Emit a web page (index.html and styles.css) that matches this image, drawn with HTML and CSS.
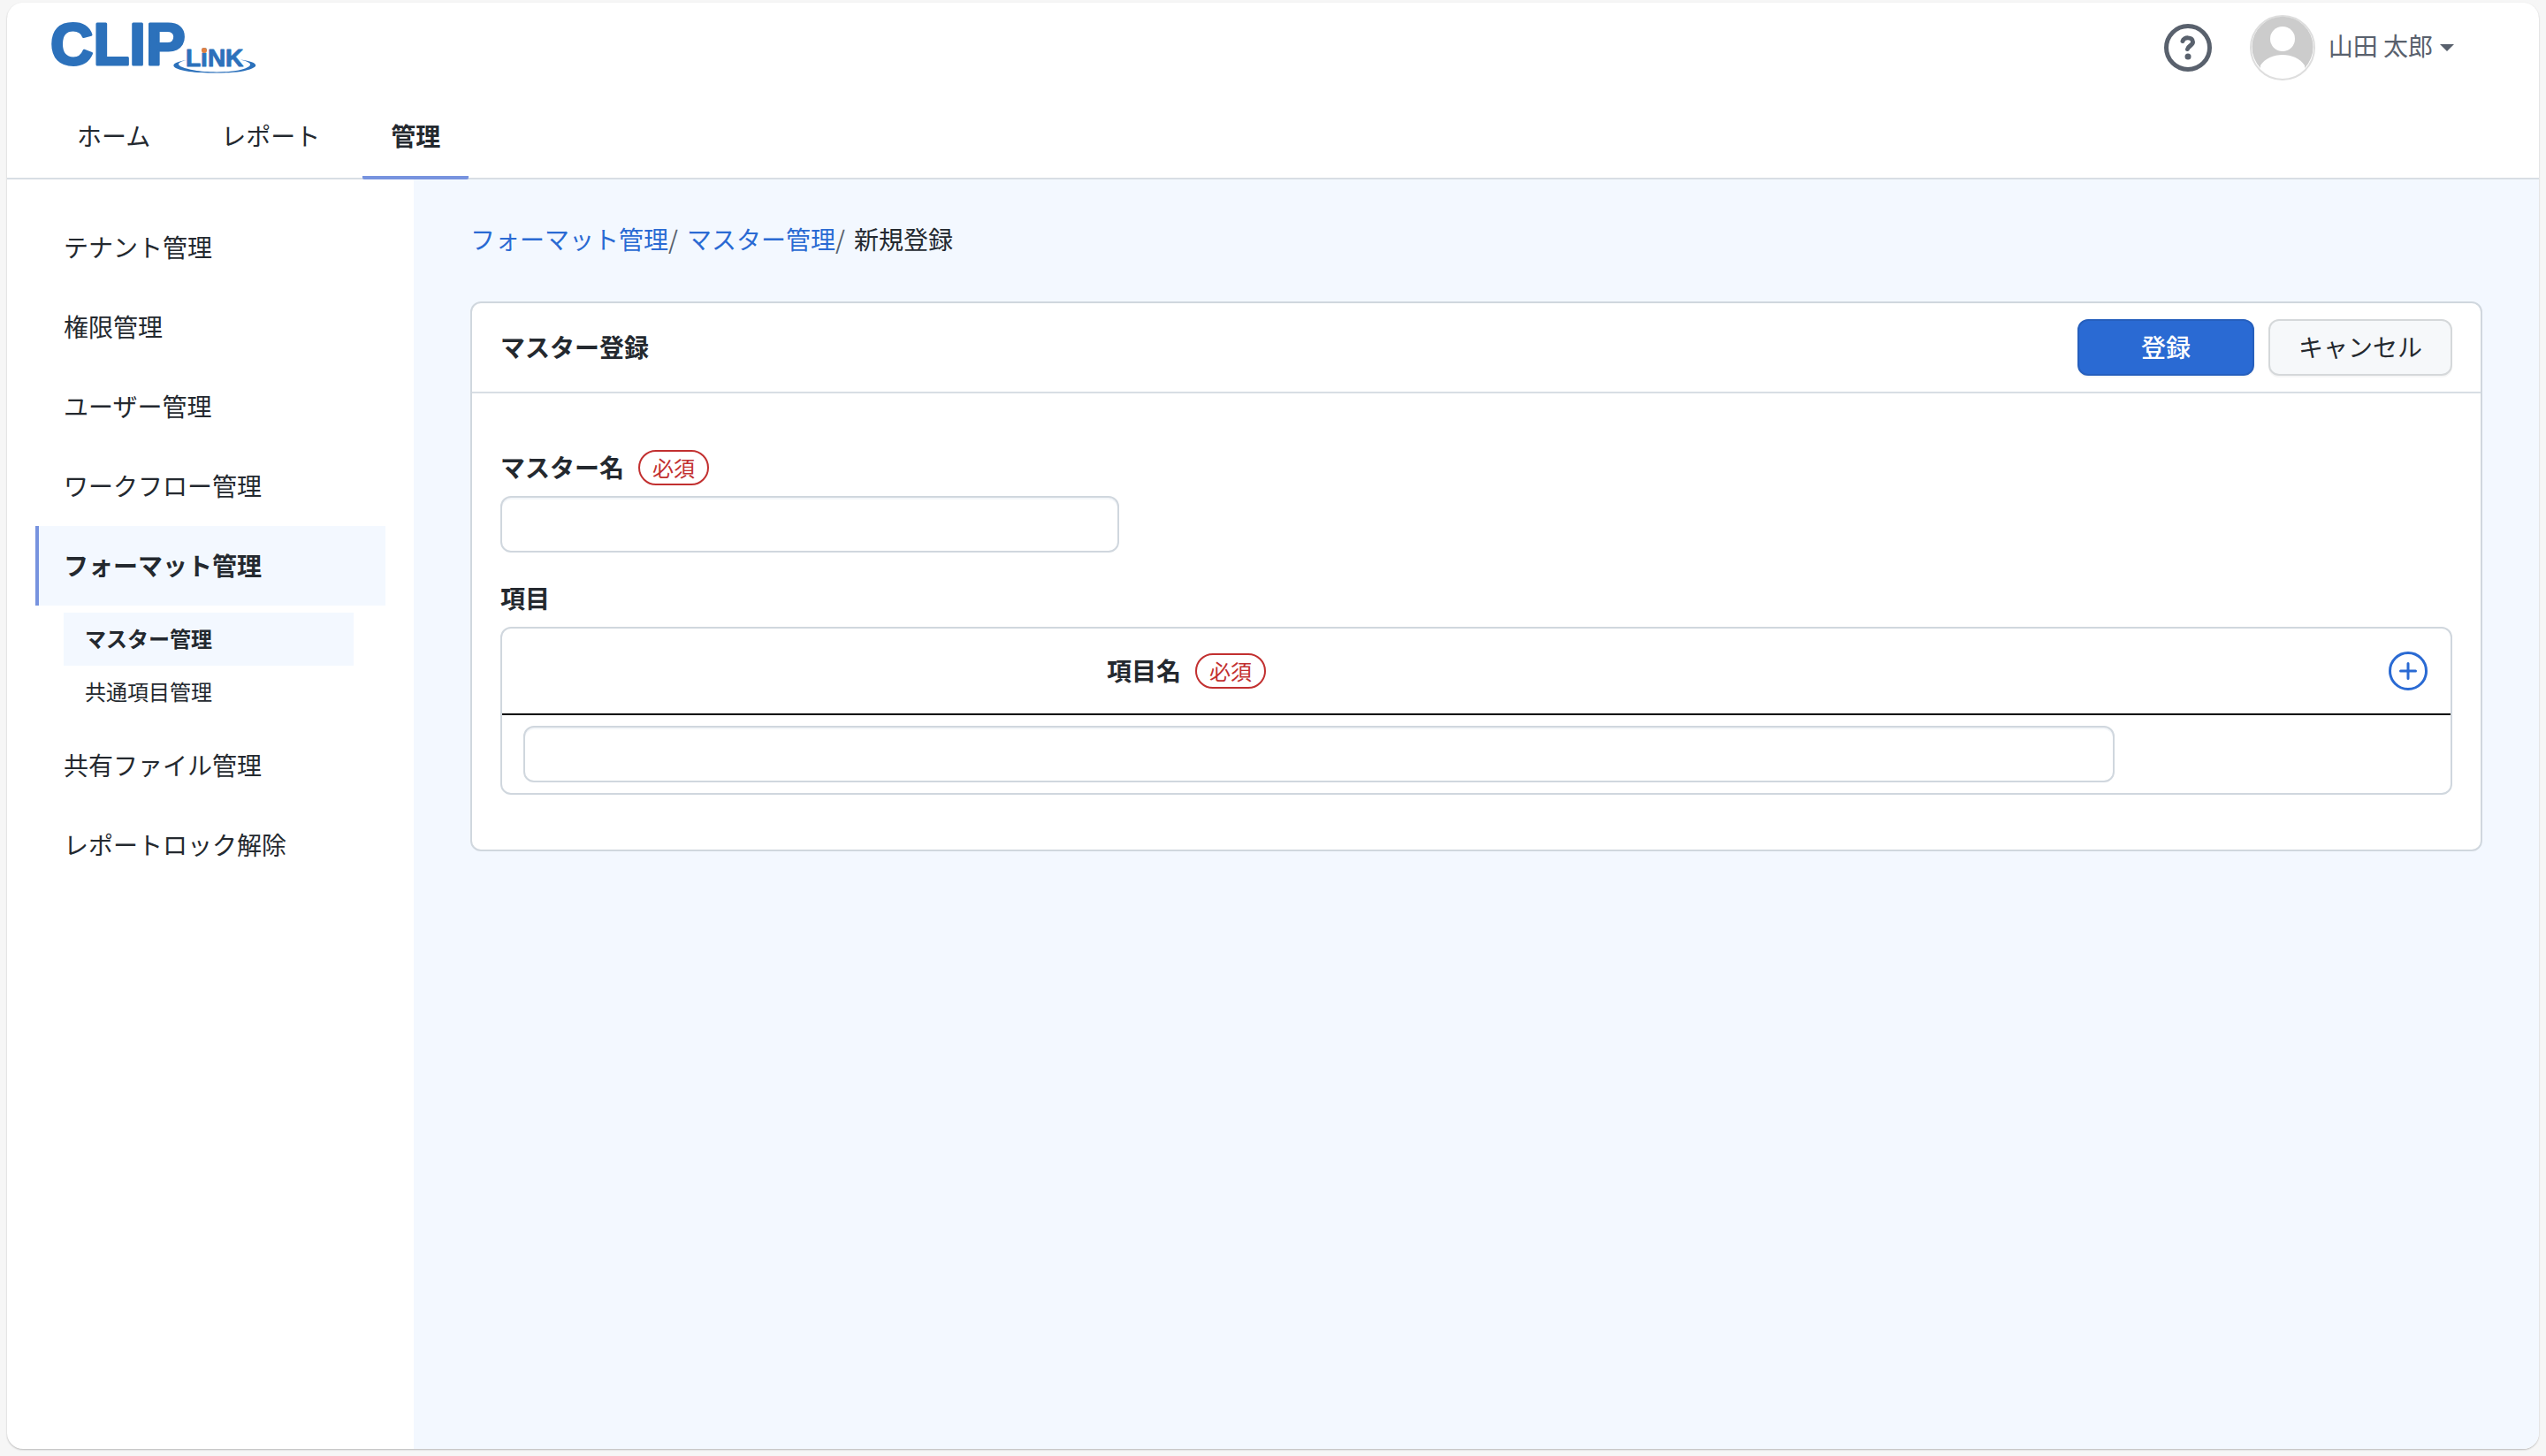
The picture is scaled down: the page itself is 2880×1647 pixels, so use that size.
FILE: index.html
```html
<!DOCTYPE html>
<html lang="ja">
<head>
    <meta charset="UTF-8">
    <meta name="viewport" content="width=device-width, initial-scale=1.0">
    <title>マスター登録 | CLIP LiNK</title>
    <link rel="stylesheet" href="styles.css">
</head>
<body>
<div class="app">
    <header class="header">
        <div class="header-top">
            <a class="logo" href="#" aria-label="CLIP LiNK">
                <svg width="248" height="90" viewBox="-8 -14 248 90">
                    <text class="logo-clip" x="-1" y="50">CLIP</text>
                    <path class="logo-ring" d="M153 45 C132 48 134 55 156 58 C172 60 200 60 214 58 C238 54 236 47 214 44.500 C230 48 228 53 212 56.500 C200 59 174 59 162 56.500 C141 53 139 48 153 45 Z"/>
                    <text class="logo-link" x="152" y="52">LiNK</text>
                    <circle class="logo-dot" cx="173" cy="34" r="3"/>
                </svg>
            </a>
            <div class="header-user">
                <a class="help" href="#" aria-label="ヘルプ">
                    <svg width="54" height="54" viewBox="0 0 54 54" fill="none" stroke="currentColor" stroke-linecap="round">
                        <circle cx="27" cy="27" r="24.500" stroke-width="5"/>
                        <path d="M21 19.500 C22 14.500 32.500 14.500 32.500 20.500 C32.500 24.500 27 25 26.500 28.500" stroke-width="5"/>
                        <circle cx="27" cy="37" r="3.500" fill="currentColor" stroke="none"/>
                    </svg>
                </a>
                <button class="user-button" type="button">
                    <svg width="74" height="74" viewBox="0 0 74 74">
                        <circle cx="37" cy="37" r="36" fill="#fff" stroke="#dedede" stroke-width="2"/>
                        <path d="M12 60 V57 C22 41 52 41 62 57 V60 A34.500 34.500 0 1 0 12 60 Z" fill="#ccc"/>
                        <circle cx="37" cy="27" r="14" fill="#fff"/>
                    </svg>
                    <span class="user-name">山田 太郎</span>
                    <span class="caret"></span>
                </button>
            </div>
        </div>
        <nav class="tabs">
            <a class="tab" href="#">ホーム</a>
            <a class="tab" href="#">レポート</a>
            <a class="tab active" href="#">管理</a>
        </nav>
    </header>

    <div class="layout">
        <nav class="sidebar">
            <a class="menu-item" href="#">テナント管理</a>
            <a class="menu-item" href="#">権限管理</a>
            <a class="menu-item" href="#">ユーザー管理</a>
            <a class="menu-item" href="#">ワークフロー管理</a>
            <a class="menu-item active" href="#">フォーマット管理</a>
            <div class="submenu">
                <a class="submenu-item active" href="#">マスター管理</a>
                <a class="submenu-item" href="#">共通項目管理</a>
            </div>
            <a class="menu-item" href="#">共有ファイル管理</a>
            <a class="menu-item" href="#">レポートロック解除</a>
        </nav>

        <main class="content">
            <nav class="breadcrumb">
                <a href="#">フォーマット管理</a>
                <span class="separator">/</span>
                <a href="#">マスター管理</a>
                <span class="separator">/</span>
                <span>新規登録</span>
            </nav>

            <form class="card">
                <div class="card-header">
                    <h1>マスター登録</h1>
                    <div class="actions">
                        <button class="btn btn-primary" type="submit">登録</button>
                        <button class="btn" type="button">キャンセル</button>
                    </div>
                </div>
                <div class="card-body">
                    <div class="field">
                        <label class="label" for="masterName"><span class="label-text">マスター名</span> <span class="required">必須</span></label>
                        <input class="input master-name" type="text" id="masterName" name="masterName">
                    </div>

                    <div class="field">
                        <h2 class="label"><span class="label-text">項目</span></h2>
                        <div class="items">
                            <table>
                                <colgroup>
                                    <col>
                                    <col class="col-space">
                                    <col class="col-action">
                                </colgroup>
                                <thead>
                                <tr>
                                    <th><label class="label" for="itemName"><span class="label-text">項目名</span> <span class="required">必須</span></label></th>
                                    <th></th>
                                    <th class="action">
                                        <button class="add-button" type="button" aria-label="追加">
                                            <svg width="44" height="44" viewBox="0 0 44 44" fill="none" stroke="currentColor" stroke-width="3" stroke-linecap="round">
                                                <circle cx="22" cy="22" r="20.500"/>
                                                <path d="M22 13.500 V30.500 M13.500 22 H30.500"/>
                                            </svg>
                                        </button>
                                    </th>
                                </tr>
                                </thead>
                                <tbody>
                                <tr>
                                    <td colspan="2"><input class="input" type="text" id="itemName" name="itemName"></td>
                                    <td></td>
                                </tr>
                                </tbody>
                            </table>
                        </div>
                    </div>
                </div>
            </form>
        </main>
    </div>
</div>
</body>
</html>
```
FILE: styles.css
```css
* {
    box-sizing: border-box;
}

body {
    margin: 0;
    padding: 3px 8px 8px;
    min-height: 100vh;
    display: flex;
    background-color: #f6f6f6;
    color: #24292f;
    font-family: "Noto Sans CJK JP", sans-serif;
    font-size: 28px;
    line-height: 40px;
}

a {
    color: inherit;
    text-decoration: none;
}

button,
input {
    font: inherit;
    color: inherit;
}

svg {
    display: block;
}

.app {
    flex: 1;
    display: flex;
    flex-direction: column;
    background-color: #fff;
    border-radius: 18px;
    box-shadow: 0 1px 2px rgba(0, 0, 0, 0.25);
    overflow: hidden;
}

/* Header */
.header {
    border-bottom: 2px solid #d8dee4;
}

.header-top {
    display: flex;
    justify-content: space-between;
    align-items: center;
    height: 106px;
    padding: 0 96px 4px 42px;
}

.logo-clip,
.logo-link {
    font-family: "Liberation Sans", sans-serif;
    font-weight: bold;
    fill: #2c71bb;
    stroke: #2c71bb;
    stroke-linejoin: round;
}

.logo-clip {
    font-size: 67px;
    stroke-width: 3px;
}

.logo-link {
    font-size: 28px;
    stroke-width: 1px;
}

.logo-ring {
    fill: #2c71bb;
}

.logo-dot {
    fill: #e2803f;
}

.header-user {
    display: flex;
    align-items: center;
    gap: 43px;
    color: #59616d;
}

.user-button {
    display: flex;
    align-items: center;
    padding: 0;
    border: none;
    background: none;
    cursor: pointer;
}

.user-name {
    margin: 0 8px 6px 15px;
}

.caret {
    border: 8px solid transparent;
    border-top-color: currentColor;
    border-bottom: none;
}

.tabs {
    display: flex;
    gap: 16px;
    padding: 0 47px;
    margin-bottom: -2px;
}

.tab {
    padding: 24px 32px 26px;
    border-bottom: 4px solid transparent;
}

.tab.active {
    font-weight: bold;
    border-color: #7793df;
    border-radius: 2px;
}

/* Sidebar */
.layout {
    flex: 1;
    display: flex;
}

.sidebar {
    width: 460px;
    padding: 32px;
}

.menu-item {
    display: block;
    padding: 24px 28px 26px;
    border-left: 4px solid transparent;
}

.menu-item.active {
    font-weight: bold;
    background-color: #f3f8ff;
    border-color: #7793df;
}

.submenu {
    margin: 8px 36px 8px 32px;
    font-size: 24px;
}

.submenu-item {
    display: block;
    padding: 9px 24px 11px;
}

.submenu-item.active {
    font-weight: bold;
    background-color: #f3f8ff;
}

/* Main content */
.content {
    flex: 1;
    padding: 47px 64px;
    background-color: #f3f8ff;
}

.breadcrumb {
    display: flex;
    margin-bottom: 51px;
}

.breadcrumb a {
    color: #2a6ad3;
}

.separator {
    width: 21px;
    color: #59616d;
}

.card {
    background-color: #fff;
    border: 2px solid #d0d7de;
    border-radius: 12px;
}

.card-header {
    display: flex;
    justify-content: space-between;
    align-items: center;
    padding: 18px 32px;
    border-bottom: 2px solid #d8dee4;
}

.card-header h1 {
    margin: 0;
    padding-bottom: 2px;
    font-size: 28px;
}

.actions {
    display: flex;
    gap: 16px;
}

.btn {
    height: 64px;
    padding: 0 32px 2px;
    background-color: #f6f8fa;
    border: 2px solid #d5d8da;
    border-radius: 12px;
    box-shadow: 0 2px 0 rgba(27, 31, 36, 0.04);
    cursor: pointer;
}

.btn-primary {
    width: 200px;
    background-color: #2a6ad3;
    border-color: #265fbd;
    color: #fff;
    font-weight: 500;
}

.card-body {
    padding: 64px 32px 62px;
}

.field + .field {
    margin-top: 32px;
}

.label {
    display: flex;
    align-items: center;
    gap: 16px;
    height: 40px;
    margin: 0 0 12px;
    font-size: 28px;
    font-weight: bold;
}

.label-text {
    padding-bottom: 3px;
}

.required {
    padding: 0 14px;
    border: 2px solid #c23030;
    border-radius: 20px;
    color: #c23030;
    font-size: 24px;
    font-weight: normal;
    line-height: 36px;
}

.input {
    display: block;
    width: 100%;
    height: 64px;
    padding: 0 24px;
    background-color: #fff;
    border: 2px solid #d0d7de;
    border-radius: 12px;
    box-shadow: inset 0 2px 0 #f3f6f9;
}

.master-name {
    max-width: 700px;
}

/* Item table */
.items {
    border: 2px solid #d0d7de;
    border-radius: 12px;
}

table {
    width: 100%;
    table-layout: fixed;
    border-collapse: separate;
    border-spacing: 0;
}

.col-space {
    width: 300px;
}

.col-action {
    width: 356px;
}

th {
    height: 98px;
    padding: 0;
    border-bottom: 2px solid #000;
}

th .label {
    justify-content: center;
    margin: 0;
}

th.action {
    padding-right: 26px;
}

td {
    padding: 12px 24px;
}

.add-button {
    display: block;
    margin-left: auto;
    padding: 0;
    border: none;
    background: none;
    color: #2a6ad3;
    cursor: pointer;
}
```
